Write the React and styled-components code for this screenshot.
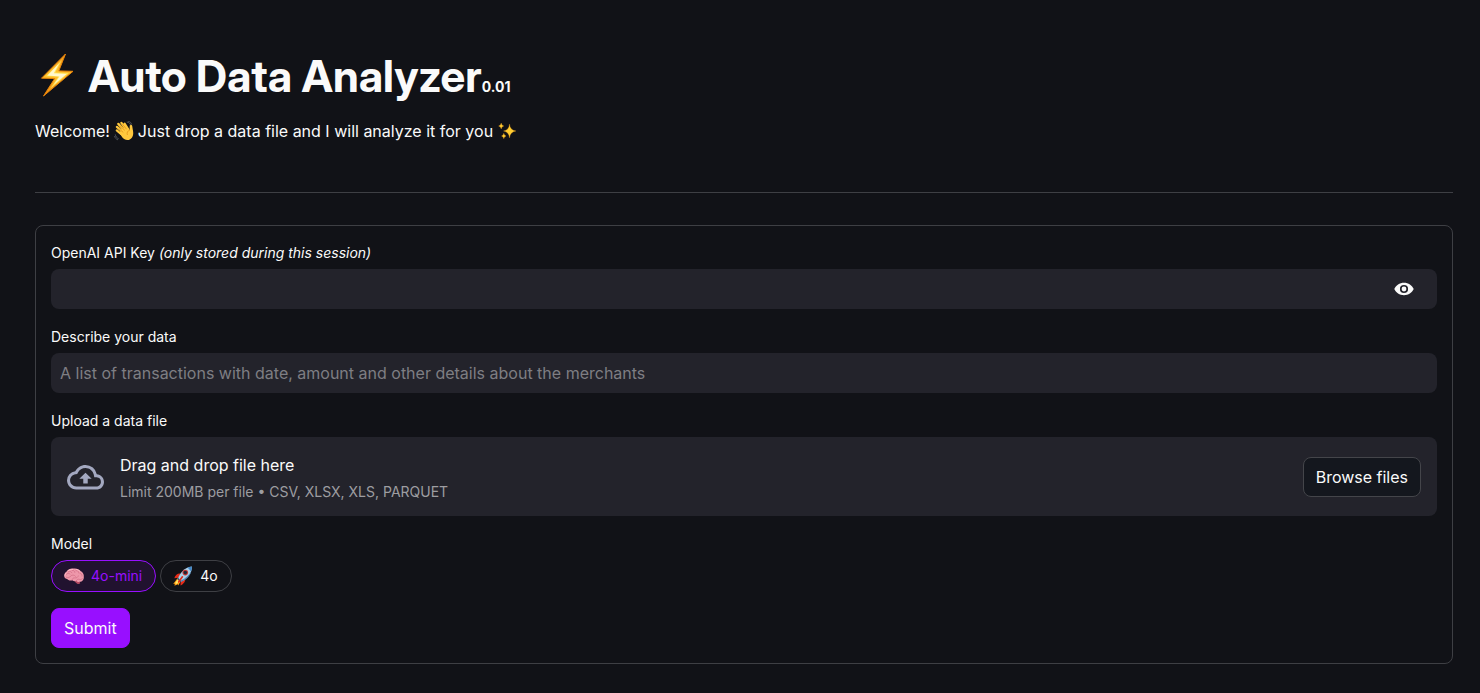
import React, { useRef, useState } from "react";
import styled, { createGlobalStyle } from "styled-components";

const GlobalStyle = createGlobalStyle`
  *, *::before, *::after { box-sizing: border-box; }
  body {
    margin: 0;
    background: #111217;
    color: #fafafa;
    font-family: Inter, "Liberation Sans", sans-serif;
    font-size: 16px;
    line-height: 24px;
  }
  button, input { font: inherit; color: inherit; }
`;

const Page = styled.main`
  padding: 48px 27px 29px 35px;
`;

const Title = styled.h1`
  display: flex;
  align-items: baseline;
  margin: 0;
  font-family: "Inter Display", Inter, "Liberation Sans", sans-serif;
  font-size: 44px;
  font-weight: 700;
  line-height: 56px;
`;

const TitleIcon = styled.svg`
  width: 44px;
  height: 44px;
  margin-right: 9px;
  align-self: center;
`;

const Version = styled.small`
  font-family: Inter, "Liberation Sans", sans-serif;
  font-size: 14px;
  line-height: 16px;
`;

const Intro = styled.p`
  display: flex;
  align-items: center;
  margin: 15px 0 0;
`;

const IntroIcon = styled.svg`
  width: 20px;
  height: 20px;
  margin: 0 4px;
`;

const Divider = styled.hr`
  margin: 49px 0 32px;
  border: 0;
  border-top: 1px solid #3e3f44;
`;

const Form = styled.form`
  display: flex;
  flex-direction: column;
  align-items: stretch;
  gap: 16px;
  padding: 15px;
  border: 1px solid #3e3f44;
  border-radius: 8px;
`;

const Field = styled.div`
  display: flex;
  flex-direction: column;
  gap: 4px;
`;

const Label = styled.label`
  font-size: 14px;
`;

const InputShell = styled.div`
  display: flex;
  height: 40px;
  background: #23232b;
  border-radius: 8px;
  overflow: hidden;
`;

const TextInput = styled.input`
  flex: 1;
  min-width: 0;
  padding: 0 9px;
  border: 0;
  outline: 0;
  background: transparent;
  &::placeholder { color: #7e7e83; opacity: 1; }
`;

const RevealButton = styled.button`
  display: flex;
  align-items: center;
  padding: 0 23px 0 12px;
  border: 0;
  background: transparent;
  cursor: pointer;
`;

const Dropzone = styled.section`
  display: flex;
  align-items: center;
  gap: 16px;
  min-height: 79px;
  padding: 12px 16px;
  background: #23232b;
  border-radius: 8px;
`;

const DropText = styled.div`
  display: flex;
  flex-direction: column;
  gap: 3px;
  flex: 1;
  padding-top: 4px;
`;

const Hint = styled.small`
  font-size: 14px;
  color: #9d9da1;
`;

const Button = styled.button`
  height: 40px;
  padding: 0 12px;
  border: 1px solid ${(p) => (p.$primary ? "#980fff" : "#44454a")};
  border-radius: 8px;
  background: ${(p) => (p.$primary ? "#980fff" : "#14171e")};
  align-self: ${(p) => (p.$primary ? "flex-start" : "center")};
  cursor: pointer;
`;

const Choices = styled.fieldset`
  margin: 0;
  padding: 0;
  border: 0;
  min-width: 0;
  font-size: 14px;
`;

const Legend = styled.legend`
  padding: 0;
  margin-bottom: 4px;
`;

const Pills = styled.div`
  display: flex;
  gap: 4px;
`;

const Pill = styled.label`
  display: flex;
  align-items: center;
  gap: 6px;
  height: 32px;
  padding: 0 13px 0 11px;
  border: 1px solid ${(p) => (p.$active ? "#980fff" : "#3e3f44")};
  border-radius: 16px;
  background: ${(p) => (p.$active ? "#21122f" : "transparent")};
  color: ${(p) => (p.$active ? "#980fff" : "#fafafa")};
  cursor: pointer;
`;

const HiddenInput = styled.input`
  position: absolute;
  width: 1px;
  height: 1px;
  margin: 0;
  opacity: 0;
  pointer-events: none;
`;

const Bolt = () => (
  <TitleIcon viewBox="0 0 44 44" aria-hidden="true">
    <defs>
      <linearGradient id="bolt" x1="0" y1="0" x2="0" y2="1">
        <stop offset="0" stopColor="#f39a1c" />
        <stop offset=".5" stopColor="#ffc52e" />
        <stop offset="1" stopColor="#f08a0c" />
      </linearGradient>
    </defs>
    <path d="M30.5 0 6.5 24.2l13.2.3L8.5 42 38 17.3l-14.2-.4Z" fill="url(#bolt)" stroke="#e88208" strokeWidth="1" strokeLinejoin="round" />
    <path d="M26.5 6.5 11 22.2l12.5.4-8 12L33.5 19l-13.2-.4Z" fill="#ffe35a" />
    <path d="M24 9.5 12.5 21.6l12 .8-5.5 8.2L31.5 20l-12.7-.8Z" fill="#fff8ce" />
  </TitleIcon>
);

const Wave = () => (
  <IntroIcon viewBox="0 0 20 20" aria-hidden="true">
    <g fill="none" stroke="#ffc83d" strokeWidth="2.3" strokeLinecap="round">
      <path d="m9 11-6.1-5.1M10 9 4.3 2.9M12 8 7.4 1.9M14 8l-3.3-5.2M7 13 2.8 9.4" />
    </g>
    <path d="M5 11.5 12.5 5l3.1 4.1.1-4.2c.1-1.7 2.3-1.7 2.5.1l.9 5.5c.8 4.7-1.8 8.5-5.5 8.6-2.2.1-3.8-1-5.2-2.5Z" fill="#ffc83d" />
    <path d="m5 7.7 4 3.5M6.3 5l4.2 4.1M8.8 3.6l3.5 4.3M15.6 9.1c-2.2.8-3 2.6-2.3 4.5" fill="none" stroke="#df8d16" strokeWidth=".7" strokeLinecap="round" />
    <path d="M13.2 1.1c1.7.2 2.9 1.2 3.4 2.8M14.5.3c1.6.4 2.6 1.3 3.1 2.7M1.4 13.8c.2 1.8 1.2 3.1 2.9 3.8M.6 15.4c.5 1.7 1.5 2.8 3 3.3" fill="none" stroke="#555960" strokeWidth=".9" strokeLinecap="round" />
  </IntroIcon>
);

const Sparkles = () => (
  <IntroIcon viewBox="0 0 20 20" aria-hidden="true">
    <g fill="#ffcd32" stroke="#d98a16" strokeWidth=".3">
      <path d="M12.5 3Q13 9.2 19 10 13 10.8 12.5 17 12 10.8 6.5 10 12 9.2 12.5 3Z" />
      <path d="M4.2 2Q4.6 4.6 6.8 5 4.6 5.4 4.2 8 3.8 5.4 1.6 5 3.8 4.6 4.2 2Z" />
      <path d="M6.8 12.2Q7.1 14.5 9.1 15 7.1 15.4 6.8 17.8 6.5 15.4 4.5 15 6.5 14.5 6.8 12.2Z" />
    </g>
  </IntroIcon>
);

const Eye = () => (
  <svg width="20" height="20" viewBox="0 0 20 20" aria-hidden="true">
    <path fill="#fafafa" fillRule="evenodd" d="M10 3.8c4.4 0 8.1 2.6 9.7 6.2-1.6 3.6-5.3 6.2-9.7 6.2S1.9 13.6.3 10C1.9 6.4 5.6 3.8 10 3.8Zm0 2.1a4.1 4.1 0 1 0 0 8.2 4.1 4.1 0 0 0 0-8.2Zm0 1.7a2.4 2.4 0 1 1 0 4.8 2.4 2.4 0 0 1 0-4.8Z" />
  </svg>
);

const CloudUpload = () => (
  <svg width="37" height="37" viewBox="0 0 24 24" aria-hidden="true">
    <path fill="#a3a8c0" d="M19.35 10.54A7.49 7.49 0 0 0 12 4.5C9.11 4.5 6.6 6.14 5.35 8.54A5.994 5.994 0 0 0 0 14.5c0 3.31 2.69 6 6 6h13c2.76 0 5-2.24 5-5 0-2.64-2.05-4.78-4.65-4.96zM19 18.5H6c-2.21 0-4-1.79-4-4 0-2.05 1.53-3.76 3.56-3.97l1.07-.11.5-.95A5.469 5.469 0 0 1 12 6.5c2.62 0 4.88 1.86 5.39 4.43l.3 1.5 1.53.11A2.98 2.98 0 0 1 22 15.5c0 1.65-1.35 3-3 3zM8 13.5h2.55v3h2.9v-3H16l-4-4z" />
  </svg>
);

const Brain = () => (
  <svg width="22" height="20" viewBox="0 0 22 20" aria-hidden="true">
    <path d="M11.5 15.5 16 14l1.2 3.2q-1.5 1.4-3.3.2Z" fill="#b64b63" />
    <path d="M1.2 10.4c-.3-2 .7-3.8 2.2-4.7C5 3.4 7.8 2.2 10.2 2.6c3-.6 5.9.5 7.4 2.5 2.2 1.1 3.6 3.4 3.2 5.6.3 2.8-1.5 5.2-4.3 5.1-1.3.6-2.4.1-3.1-.7-1.7.4-3 .2-4.1-.8-2.2.7-4.2.2-5-1.2-1.6-.3-2.7-1.2-3.1-2.7Z" fill="#ee97aa" />
    <path d="M3.1 8.5c1.2-1.6 2.8-1.5 3.9-.5M5.3 5.8c1.6-.8 3.1-.2 3.6 1M9.2 4.5c1.5-.3 2.7.5 2.7 1.9M13 4.6c2-.1 3 1 2.8 2.3M17 7.3c1.7.4 2.3 1.6 2 2.7M3.4 11.3c1.8.7 3.5.2 4.2-1.2 1.4-1.5 3.8-1.4 4.9.2M9.1 14c.1-1.5 1.2-2.3 2.7-2.1 1.8.3 3.2-.5 3.5-2M13.4 14.6c.5-1.3 1.8-1.8 3.5-1.1 1.3.2 2.1-.3 2.5-1" fill="none" stroke="#d06b84" strokeWidth=".7" strokeLinecap="round" />
    <path d="M5 4.8c1.4-1.2 3.3-1.6 4.7-1.4M13.5 3.5c1.2.2 2.3.7 3.1 1.5M2 9.2c.1-.9.6-1.7 1.2-2.2" fill="none" stroke="#ffc4cb" strokeWidth=".8" strokeLinecap="round" />
  </svg>
);

const Rocket = () => (
  <svg width="22" height="22" viewBox="0 0 22 22" aria-hidden="true">
    <path d="M5.5 13.2 1.2 19l1.6-.3-.3 2.1 3.2-1.6.5 1.3 3-5Z" fill="#ff9e13" />
    <path d="m6 14-3.2 4.5 1.5-.2-.1 1.2L8 15.8Z" fill="#ffed69" />
    <path d="M8.3 8.6c-2.8-.3-5 1.7-6 4.7l4.3-.6ZM13.2 13.2c.6 3-1.5 5.7-4.7 7.3l.2-4.6Z" fill="#e42b19" />
    <path d="M6 13.2C7.6 8.2 12.4 2.4 19.8 1.4c.6 6.2-4.6 12.5-10.9 15.4Z" fill="#a9cfe8" />
    <path d="M15.5 2.6q2-.9 4.3-1.2.3 2.6-.7 5Z" fill="#4388c8" />
    <path d="M8.3 15.8c5.3-2.4 9-6 10.8-9.4-.8 4.5-5.2 8.5-10.2 10.4Z" fill="#4d87b8" />
    <circle cx="13.3" cy="7.6" r="2.8" fill="#c63836" />
    <circle cx="13.3" cy="7.6" r="1.8" fill="#202736" />
    <path d="m6 12.8 3.4 3.8-1.2.6-3-3.2Z" fill="#345878" />
    <path d="m10.4 11.8-3.8 5.1" stroke="#e42b19" strokeWidth="1.6" strokeLinecap="round" />
  </svg>
);

const models = [
  { value: "4o-mini", icon: <Brain /> },
  { value: "4o", icon: <Rocket /> },
];

export default function App() {
  const fileRef = useRef(null);
  const [visible, setVisible] = useState(false);
  const [model, setModel] = useState("4o-mini");

  return (
    <>
      <GlobalStyle />
      <Page>
        <Title>
          <Bolt />
          Auto Data Analyzer<Version>0.01</Version>
        </Title>
        <Intro>
          Welcome! <Wave />
          Just drop a data file and I will analyze it for you <Sparkles />
        </Intro>
        <Divider />
        <Form onSubmit={(e) => e.preventDefault()}>
          <Field>
            <Label htmlFor="api-key">
              OpenAI API Key <em>(only stored during this session)</em>
            </Label>
            <InputShell>
              <TextInput id="api-key" type={visible ? "text" : "password"} autoComplete="off" />
              <RevealButton type="button" aria-label="Show password text" onClick={() => setVisible(!visible)}>
                <Eye />
              </RevealButton>
            </InputShell>
          </Field>
          <Field>
            <Label htmlFor="description">Describe your data</Label>
            <InputShell>
              <TextInput
                id="description"
                type="text"
                placeholder="A list of transactions with date, amount and other details about the merchants"
              />
            </InputShell>
          </Field>
          <Field>
            <Label htmlFor="data-file">Upload a data file</Label>
            <Dropzone>
              <CloudUpload />
              <DropText>
                <span>Drag and drop file here</span>
                <Hint>Limit 200MB per file • CSV, XLSX, XLS, PARQUET</Hint>
              </DropText>
              <HiddenInput ref={fileRef} id="data-file" type="file" accept=".csv,.xlsx,.xls,.parquet" tabIndex={-1} />
              <Button type="button" onClick={() => fileRef.current.click()}>
                Browse files
              </Button>
            </Dropzone>
          </Field>
          <Choices>
            <Legend>Model</Legend>
            <Pills>
              {models.map(({ value, icon }) => (
                <Pill key={value} $active={model === value}>
                  <HiddenInput
                    type="radio"
                    name="model"
                    value={value}
                    checked={model === value}
                    onChange={() => setModel(value)}
                  />
                  {icon}
                  {value}
                </Pill>
              ))}
            </Pills>
          </Choices>
          <Button type="submit" $primary>
            Submit
          </Button>
        </Form>
      </Page>
    </>
  );
}
